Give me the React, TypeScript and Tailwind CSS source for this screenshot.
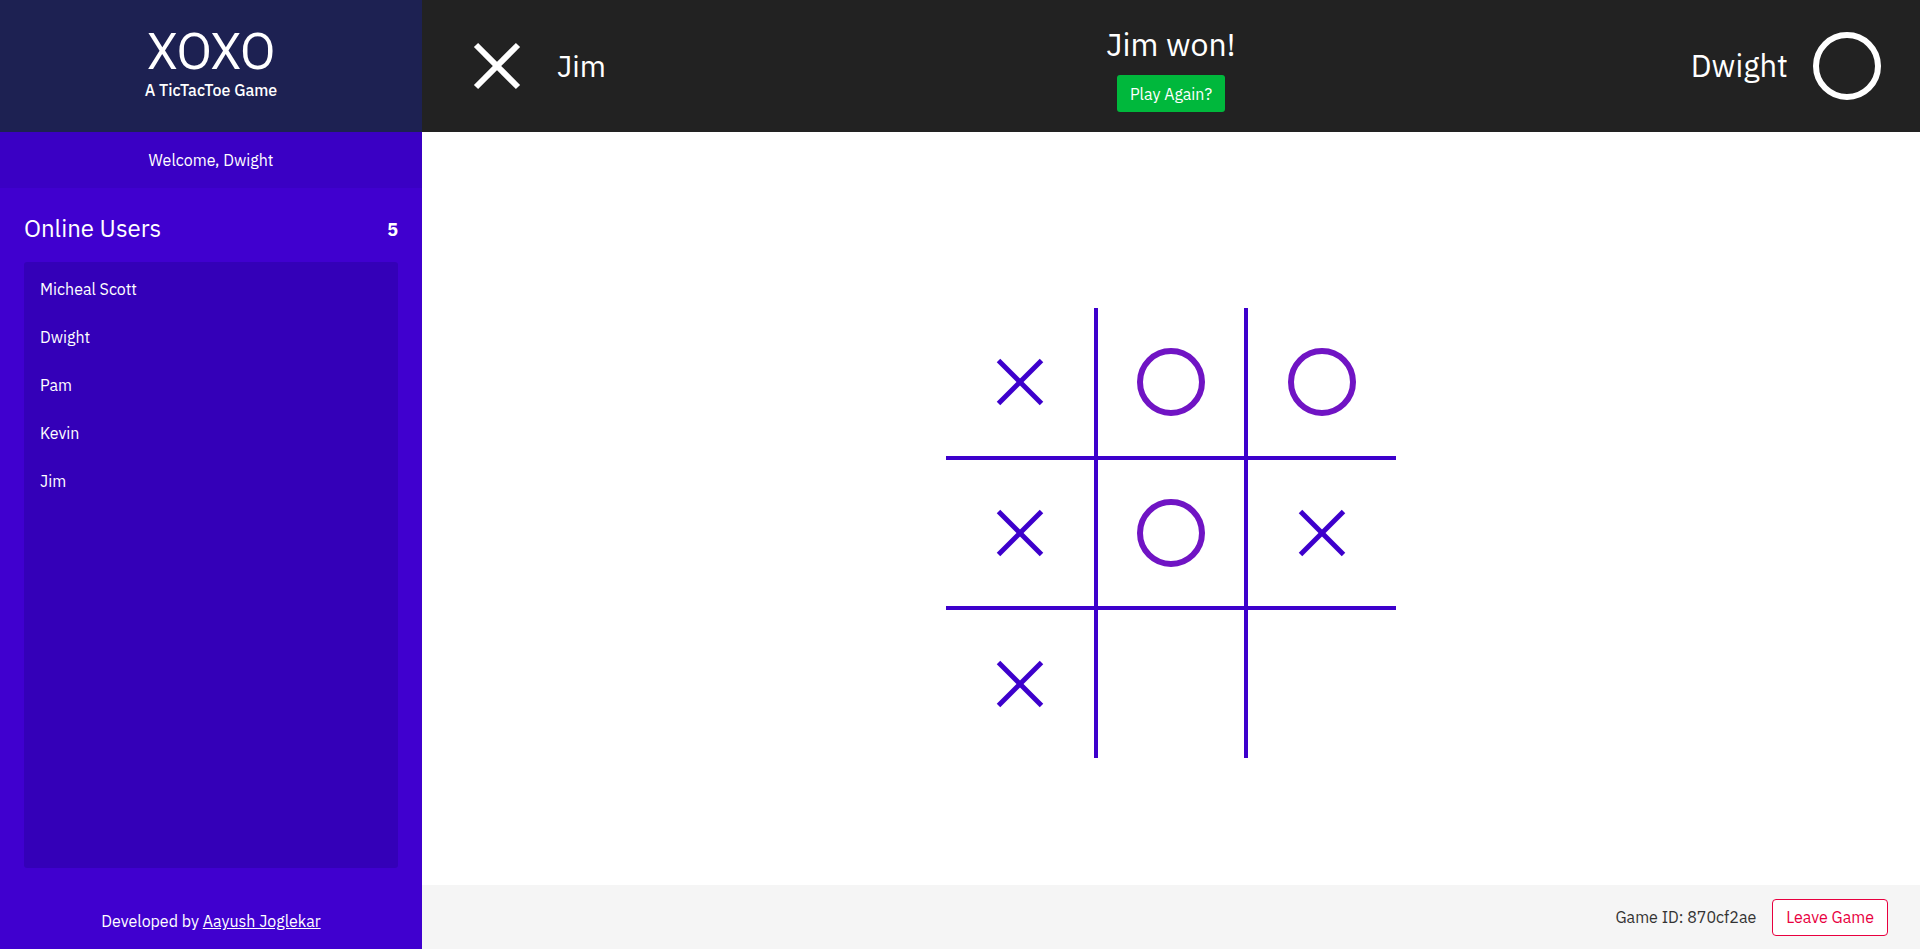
import React from "react";

type Mark = "X" | "O" | null;

const board: Mark[] = ["X", "O", "O", "X", "O", "X", "X", null, null];

const colW = ["w-[152px]", "w-[150px]", "w-[148px]"];
const rowH = ["h-[152px]", "h-[150px]", "h-[148px]"];

function XMark({ size, stroke, color }: { size: number; stroke: number; color: string }) {
  return (
    <svg width={size} height={size} viewBox={`0 0 ${size} ${size}`} className="block">
      <line x1={stroke / 2} y1={stroke / 2} x2={size - stroke / 2} y2={size - stroke / 2} stroke={color} strokeWidth={stroke} />
      <line x1={size - stroke / 2} y1={stroke / 2} x2={stroke / 2} y2={size - stroke / 2} stroke={color} strokeWidth={stroke} />
    </svg>
  );
}

function OMark({ size, stroke, color }: { size: number; stroke: number; color: string }) {
  return (
    <svg width={size} height={size} viewBox={`0 0 ${size} ${size}`} className="block">
      <circle cx={size / 2} cy={size / 2} r={size / 2 - stroke / 2} fill="none" stroke={color} strokeWidth={stroke} />
    </svg>
  );
}

const users = ["Micheal Scott", "Dwight", "Pam", "Kevin", "Jim"];

export default function App() {
  return (
    <div
      className="flex h-[949px] w-full overflow-hidden"
      style={{ fontFamily: '"IBM Plex Sans", "Open Sans", "Noto Sans", sans-serif' }}
    >
      {/* Sidebar */}
      <aside className="flex w-[422px] shrink-0 flex-col bg-[#4000cf] text-white">
        <div className="flex h-[132px] flex-col items-center bg-[#1d2152] pt-[26px]">
          <div className="text-[50px] leading-[50px] font-normal tracking-[-0.5px]">XOXO</div>
          <div className="mt-1 text-[16px] leading-5 font-medium">A TicTacToe Game</div>
        </div>
        <div className="flex h-[56px] items-center justify-center bg-[#3a00c4] text-[16px]">
          Welcome, Dwight
        </div>
        <div className="flex flex-1 flex-col px-6 pt-6">
          <div className="mb-[18px] flex items-center justify-between">
            <span className="text-[24px] leading-8">Online Users</span>
            <span className="pt-[2px] text-[18px] font-bold">5</span>
          </div>
          <ul className="flex-1 rounded-[3px] bg-[#3400b8] pt-[3px]">
            {users.map((u) => (
              <li key={u} className="px-4 py-3 text-[16px] leading-6">
                {u}
              </li>
            ))}
          </ul>
          <div className="flex h-[81px] items-end justify-center pb-4 text-[16px] leading-6">
            <span>
              Developed by <a className="underline">Aayush Joglekar</a>
            </span>
          </div>
        </div>
      </aside>

      {/* Main */}
      <div className="flex flex-1 flex-col">
        <header className="grid h-[132px] grid-cols-[1fr_auto_1fr] items-center bg-[#222222] text-white">
          <div className="flex items-center pl-[51px]">
            <XMark size={48} stroke={6} color="#ffffff" />
            <span className="ml-[36px] text-[30px] font-normal leading-10">Jim</span>
          </div>
          <div className="flex flex-col items-center pt-1">
            <div className="text-[32px] leading-10 font-normal">Jim won!</div>
            <button className="mt-[11px] h-[37px] rounded-[3px] bg-[#00b83c] px-[13px] text-[16px] text-white">
              Play Again?
            </button>
          </div>
          <div className="flex items-center justify-end pr-[39px]">
            <span className="mr-[25px] text-[31px] font-normal leading-10">Dwight</span>
            <OMark size={68} stroke={6} color="#ffffff" />
          </div>
        </header>

        <main className="flex flex-1 items-center justify-center bg-white pt-[49px]">
          <div className="grid grid-cols-[152px_150px_148px]">
            {board.map((m, i) => {
              const r = Math.floor(i / 3);
              const c = i % 3;
              const borderR = c < 2 ? "border-r-4" : "";
              const borderB = r < 2 ? "border-b-4" : "";
              return (
                <div
                  key={i}
                  className={`${colW[c]} ${rowH[r]} ${borderR} ${borderB} flex items-center justify-center border-[#3d00cc]`}
                >
                  {m === "X" && <XMark size={48} stroke={5} color="#3d00cc" />}
                  {m === "O" && <OMark size={68} stroke={6} color="#7014c4" />}
                </div>
              );
            })}
          </div>
        </main>

        <footer className="flex h-[64px] items-center justify-end gap-4 bg-[#f5f5f5] pr-8">
          <span className="text-[16px] text-[#333333]">Game ID: 870cf2ae</span>
          <button className="h-[37px] rounded-[4px] border border-[#e8003f] bg-white px-[13px] text-[16px] text-[#e8003f]">
            Leave Game
          </button>
        </footer>
      </div>
    </div>
  );
}
